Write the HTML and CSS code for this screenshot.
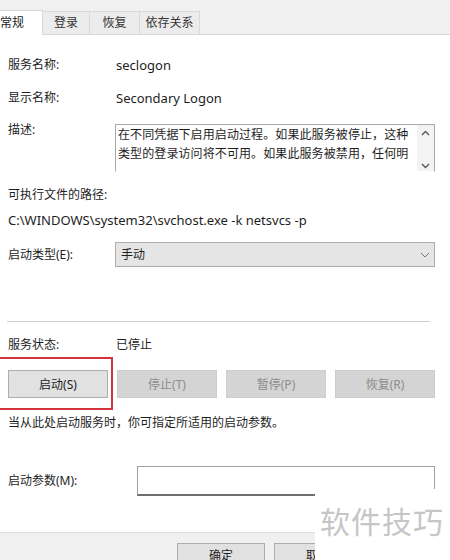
FILE: index.html
```html
<!DOCTYPE html>
<html lang="zh-CN">

<head>
  <meta charset="UTF-8">
  <meta name="viewport" content="width=device-width, initial-scale=1.0">
  <title>Secondary Logon 属性</title>
  <link rel="stylesheet" href="styles.css">
</head>

<body>
  <div class="dialog">
    <div class="tabs">
      <div class="tab active">常规</div>
      <div class="tab">登录</div>
      <div class="tab">恢复</div>
      <div class="tab">依存关系</div>
    </div>

    <div class="content">
      <div class="row row_name">
        <span class="label">服务名称:</span>
        <span class="value latin">seclogon</span>
      </div>
      <div class="row row_display">
        <span class="label">显示名称:</span>
        <span class="value latin">Secondary Logon</span>
      </div>
      <div class="row row_desc">
        <span class="label">描述:</span>
        <div class="desc_box">
          <div class="desc_text">在不同凭据下启用启动过程。如果此服务被停止，这种类型的登录访问将不可用。如果此服务被禁用，任何明</div>
          <div class="scroll">
            <svg width="9" height="6" viewBox="0 0 9 6"><path d="M1 5 L4.5 1.5 L8 5" fill="none" stroke="#555" stroke-width="1.4"/></svg>
            <svg width="9" height="6" viewBox="0 0 9 6"><path d="M1 1 L4.5 4.5 L8 1" fill="none" stroke="#555" stroke-width="1.4"/></svg>
          </div>
        </div>
      </div>

      <div class="path_label">可执行文件的路径:</div>
      <div class="path latin">C:\WINDOWS\system32\svchost.exe -k netsvcs -p</div>

      <div class="row row_type">
        <span class="label">启动类型(E):</span>
        <div class="select">
          <span>手动</span>
          <svg width="10" height="6" viewBox="0 0 10 6"><path d="M1 1 L5 5 L9 1" fill="none" stroke="#777" stroke-width="1"/></svg>
        </div>
      </div>

      <div class="separator"></div>

      <div class="row row_status">
        <span class="label">服务状态:</span>
        <span class="value">已停止</span>
      </div>

      <div class="buttons">
        <button class="btn">启动(S)</button>
        <button class="btn disabled">停止(T)</button>
        <button class="btn disabled">暂停(P)</button>
        <button class="btn disabled">恢复(R)</button>
        <div class="highlight"></div>
      </div>

      <div class="hint">当从此处启动服务时，你可指定所适用的启动参数。</div>

      <div class="row row_param">
        <span class="label">启动参数(M):</span>
        <div class="input"></div>
      </div>
    </div>

    <div class="footer">
      <button class="btn footer_btn">确定</button>
      <button class="btn footer_btn">取消</button>
      <button class="btn footer_btn">应用(A)</button>
    </div>

    <div class="watermark">软件技巧</div>
  </div>
</body>

</html>
```

FILE: styles.css
```css
* {
  margin: 0;
  padding: 0;
  box-sizing: border-box;
}

body {
  width: 450px;
  height: 560px;
  overflow: hidden;
  background: #fff;
  font-family: "Noto Sans", "Noto Sans CJK SC", sans-serif;
  font-size: 12px;
  color: #1e1e1e;
}

.dialog {
  position: relative;
  height: 560px;
}

.latin {
  font-size: 13px;
}

/* tab strip */
.tabs {
  display: flex;
  align-items: flex-end;
  height: 35px;
  background: #f0f0f0;
  border-bottom: 1px solid #d9d9d9;
}

.tab {
  height: 23px;
  line-height: 22px;
  text-align: center;
  white-space: nowrap;
  border: 1px solid #d9d9d9;
  border-bottom: none;
  border-left: none;
  background: #ececec;
  color: #333;
}

.tab.active {
  width: 51px;
  margin-left: -8px;
  padding-left: 8px;
  text-align: left;
  height: 25px;
  margin-bottom: -1px;
  line-height: 23px;
  background: #fff;
  color: #1e1e1e;
}

.tab:nth-child(2) {
  width: 47px;
}

.tab:nth-child(3) {
  width: 50px;
}

.tab:nth-child(4) {
  width: 60px;
}

/* content */
.content {
  padding: 0 15px 0 8px;
}

.row {
  display: flex;
  align-items: center;
  line-height: 20px;
}

.row .label {
  width: 108px;
  flex-shrink: 0;
}

.row_name {
  margin-top: 20px;
}

.row_display {
  margin-top: 13px;
}

.row_desc {
  margin-top: 12px;
  align-items: flex-start;
}

.row_desc .label {
  width: 107px;
}

.desc_box {
  display: flex;
  flex: 1;
  height: 48px;
  margin-top: 4px;
  border: 1px solid #a9a9a9;
  border-bottom-color: transparent;
}

.desc_text {
  flex: 1;
  padding-left: 2px;
  line-height: 19px;
  letter-spacing: 0.1px;
}

.scroll {
  width: 17px;
  display: flex;
  flex-direction: column;
  justify-content: space-between;
  align-items: center;
  padding: 5px 0 2px;
  background: #f3f3f3;
}

.path_label {
  margin-top: 13px;
  line-height: 20px;
}

.path {
  margin-top: 5px;
  line-height: 20px;
}

.row_type {
  margin-top: 12px;
}

.row_type .label {
  width: 107px;
}

.select {
  flex: 1;
  height: 25px;
  display: flex;
  align-items: center;
  justify-content: space-between;
  padding: 0 4px 0 5px;
  background: #e5e5e5;
  border: 1px solid #adadad;
}

.separator {
  width: 423px;
  height: 1px;
  margin: 54px 0 0 -1px;
  background: #cfcfcf;
}

.row_status {
  margin-top: 13px;
}

/* action buttons */
.buttons {
  position: relative;
  display: grid;
  grid-template-columns: repeat(4, 1fr);
  gap: 9px;
  margin-top: 15px;
}

.btn {
  height: 28px;
  font-family: inherit;
  font-size: 12px;
  color: #1e1e1e;
  background: #e1e1e1;
  border: 1px solid #adadad;
}

.btn.disabled {
  color: #8d8d8d;
  background: #d4d4d4;
  border-color: #cdcdcd;
}

.highlight {
  position: absolute;
  left: -10px;
  top: -13px;
  width: 115px;
  height: 53px;
  border: 2px solid #d5333b;
}

.hint {
  margin-top: 15px;
  line-height: 20px;
}

.row_param {
  margin-top: 33px;
}

.row_param .label {
  width: 129px;
}

.input {
  flex: 1;
  height: 30px;
  border: 1px solid #9f9f9f;
  border-bottom: 2px solid #6e6e6e;
}

/* bottom bar */
.footer {
  display: flex;
  gap: 9px;
  margin-top: 36px;
  padding: 10px 0 0 177px;
  height: 40px;
  background: #f0f0f0;
  border-top: 1px solid #dedede;
}

.footer_btn {
  flex-shrink: 0;
  width: 88px;
  height: 24px;
}

.watermark {
  position: absolute;
  left: 315px;
  top: 489px;
  width: 135px;
  height: 71px;
  padding: 13px 0 0 5px;
  background: #fff;
  color: #c6c6c6;
  font-family: "Noto Sans CJK SC", sans-serif;
  font-size: 30px;
  line-height: 36px;
  letter-spacing: 1px;
}
```
